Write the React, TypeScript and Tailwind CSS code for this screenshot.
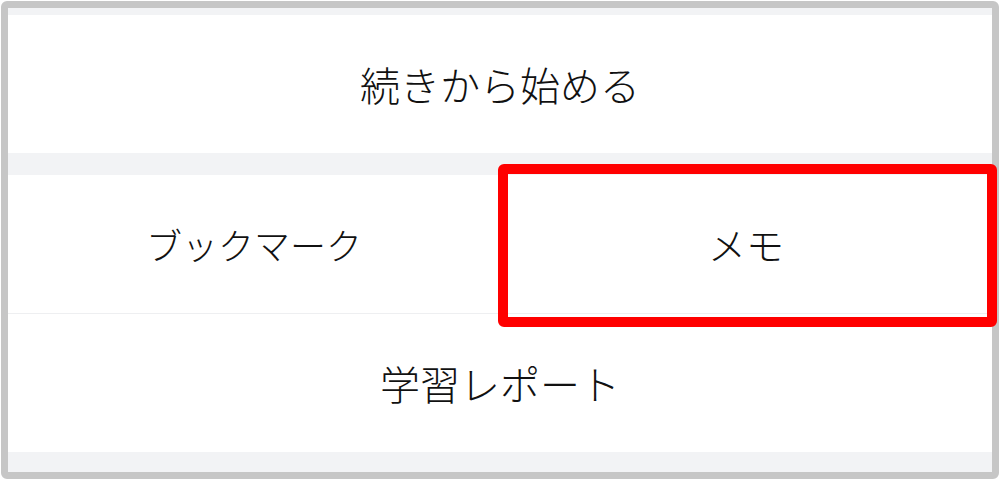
import React from "react";

const jp = { fontFamily: '"Noto Sans CJK JP", "Noto Sans", sans-serif' };

function Row({ children, size = "text-[38px]" }: { children: React.ReactNode; size?: string }) {
    return (
        <div className="h-[138px] flex items-center justify-center bg-white">
            <span className={`${size} leading-none font-light text-[#111]`} style={jp}>
                {children}
            </span>
        </div>
    );
}

export default function App() {
    return (
        <div className="w-[1000px] h-[481px] bg-white p-[1px] relative">
            <div className="w-[998px] h-[478px] border-[7px] border-[#c6c6c6] rounded-[6px] overflow-hidden flex flex-col">
                {/* top gap */}
                <div className="h-[7px] bg-[#f2f3f5]" />
                <Row size="text-[40px]">続きから始める</Row>
                <div className="h-[22px] bg-[#f2f3f5]" />
                <div className="grid grid-cols-2 border-b border-[#eeeff1]">
                    <Row size="text-[36px]">ブックマーク</Row>
                    <Row size="text-[38px]">メモ</Row>
                </div>
                <Row size="text-[40px]">学習レポート</Row>
                <div className="flex-1 bg-[#f2f3f5]" />
            </div>

            {/* highlight annotation */}
            <div className="absolute left-[498px] top-[164px] w-[499px] h-[163px] border-[10px] border-[#ff0000] rounded-[6px]" />
        </div>
    );
}
